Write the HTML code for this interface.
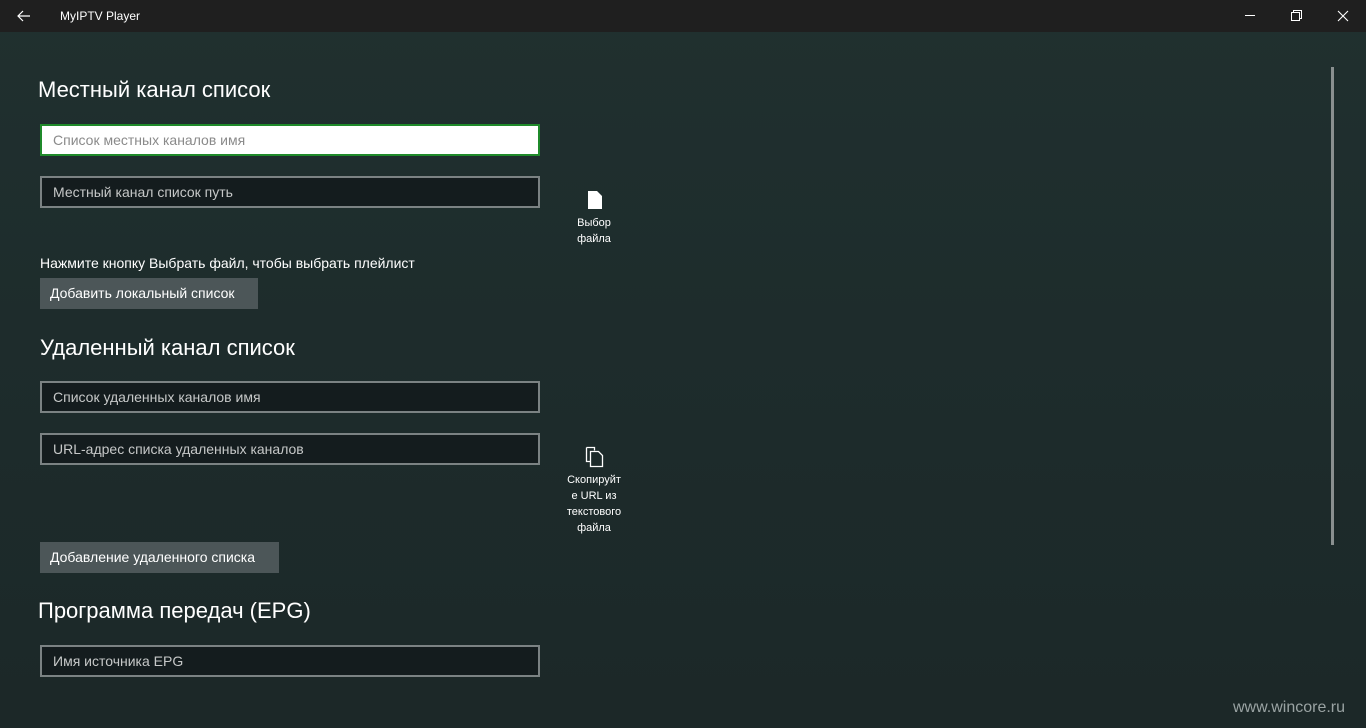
<!DOCTYPE html>
<html><head><meta charset="utf-8"><style>
*{margin:0;padding:0;box-sizing:border-box}
body{width:1366px;height:728px;overflow:hidden;font-family:"Liberation Sans",sans-serif;background:linear-gradient(180deg,#20302f 0%,#1d2b2b 60%,#1c2828 100%);color:#fff;position:relative}
.tb{position:absolute;left:0;top:0;width:1366px;height:32px;background:#1f1f1f}
.tb .t{position:absolute;left:60px;top:9px;font-size:12px;color:#fff}
.abs{position:absolute}
h1{position:absolute;font-weight:normal;font-size:22px;color:#fff}
.in{position:absolute;left:40px;width:500px;height:32px;border:2px solid #7b8283;background:#141c1e;color:#c6c8c8;font-size:14px;padding:6px 11px}
.btn{position:absolute;left:40px;height:31px;background:#4c5658;color:#fff;font-size:14px;padding:7px 10px}
.lbl{position:absolute;font-size:11px;text-align:center;line-height:16px;color:#fff}
</style></head><body>
<div class="tb">
<svg class="abs" style="left:16px;top:9px" width="16" height="14" viewBox="0 0 16 14"><path d="M14 7H2M7 2L2 7l5 5" stroke="#fff" stroke-width="1.2" fill="none"/></svg>
<div class="t">MyIPTV Player</div>
<svg class="abs" style="left:1245px;top:15px" width="12" height="2"><rect width="10" height="1" fill="#fff"/></svg>
<svg class="abs" style="left:1291px;top:10px" width="12" height="12" viewBox="0 0 12 12"><rect x="0.5" y="2.5" width="8" height="8" stroke="#fff" fill="none"/><path d="M2.5 2.5V0.5h8v8h-2" stroke="#fff" fill="none"/></svg>
<svg class="abs" style="left:1337px;top:10px" width="12" height="12" viewBox="0 0 12 12"><path d="M1 1L11 11M11 1L1 11" stroke="#fff" stroke-width="1.1"/></svg>
</div>
<div class="abs" style="left:1331px;top:67px;width:3px;height:478px;background:#8a9090"></div>
<h1 style="left:38px;top:77px">Местный канал список</h1>
<div class="in" style="top:124px;background:#fff;border-color:#1f8a2a;color:#8a8a8a">Список местных каналов имя</div>
<div class="in" style="top:176px">Местный канал список путь</div>
<svg class="abs" style="left:587px;top:190px" width="16" height="20" viewBox="0 0 16 20"><path d="M1 1h9l5 5v13H1z" fill="#fff"/></svg>
<div class="lbl" style="left:564px;top:215px;width:60px">Выбор<br>файла</div>
<div class="abs" style="left:40px;top:255px;font-size:14px">Нажмите кнопку Выбрать файл, чтобы выбрать плейлист</div>
<div class="btn" style="top:278px;width:218px">Добавить локальный список</div>
<h1 style="left:40px;top:335px">Удаленный канал список</h1>
<div class="in" style="top:381px">Список удаленных каналов имя</div>
<div class="in" style="top:433px">URL-адрес списка удаленных каналов</div>
<svg class="abs" style="left:585px;top:446px" width="20" height="22" viewBox="0 0 20 22"><path d="M1.5 1.5h8v3M1.5 1.5v14h4" stroke="#fff" stroke-width="1.3" fill="none"/><path d="M5.5 5.5h8l4 4v11h-12z" stroke="#fff" stroke-width="1.3" fill="none"/></svg>
<div class="lbl" style="left:559px;top:472px;width:70px">Скопируйт<br>е URL из<br>текстового<br>файла</div>
<div class="btn" style="top:542px;width:239px">Добавление удаленного списка</div>
<h1 style="left:38px;top:598px">Программа передач (EPG)</h1>
<div class="in" style="top:645px">Имя источника EPG</div>
<div class="abs" style="left:1233px;top:699px;font-size:16px;color:#9aa3a3">www.wincore.ru</div>
</body></html>
